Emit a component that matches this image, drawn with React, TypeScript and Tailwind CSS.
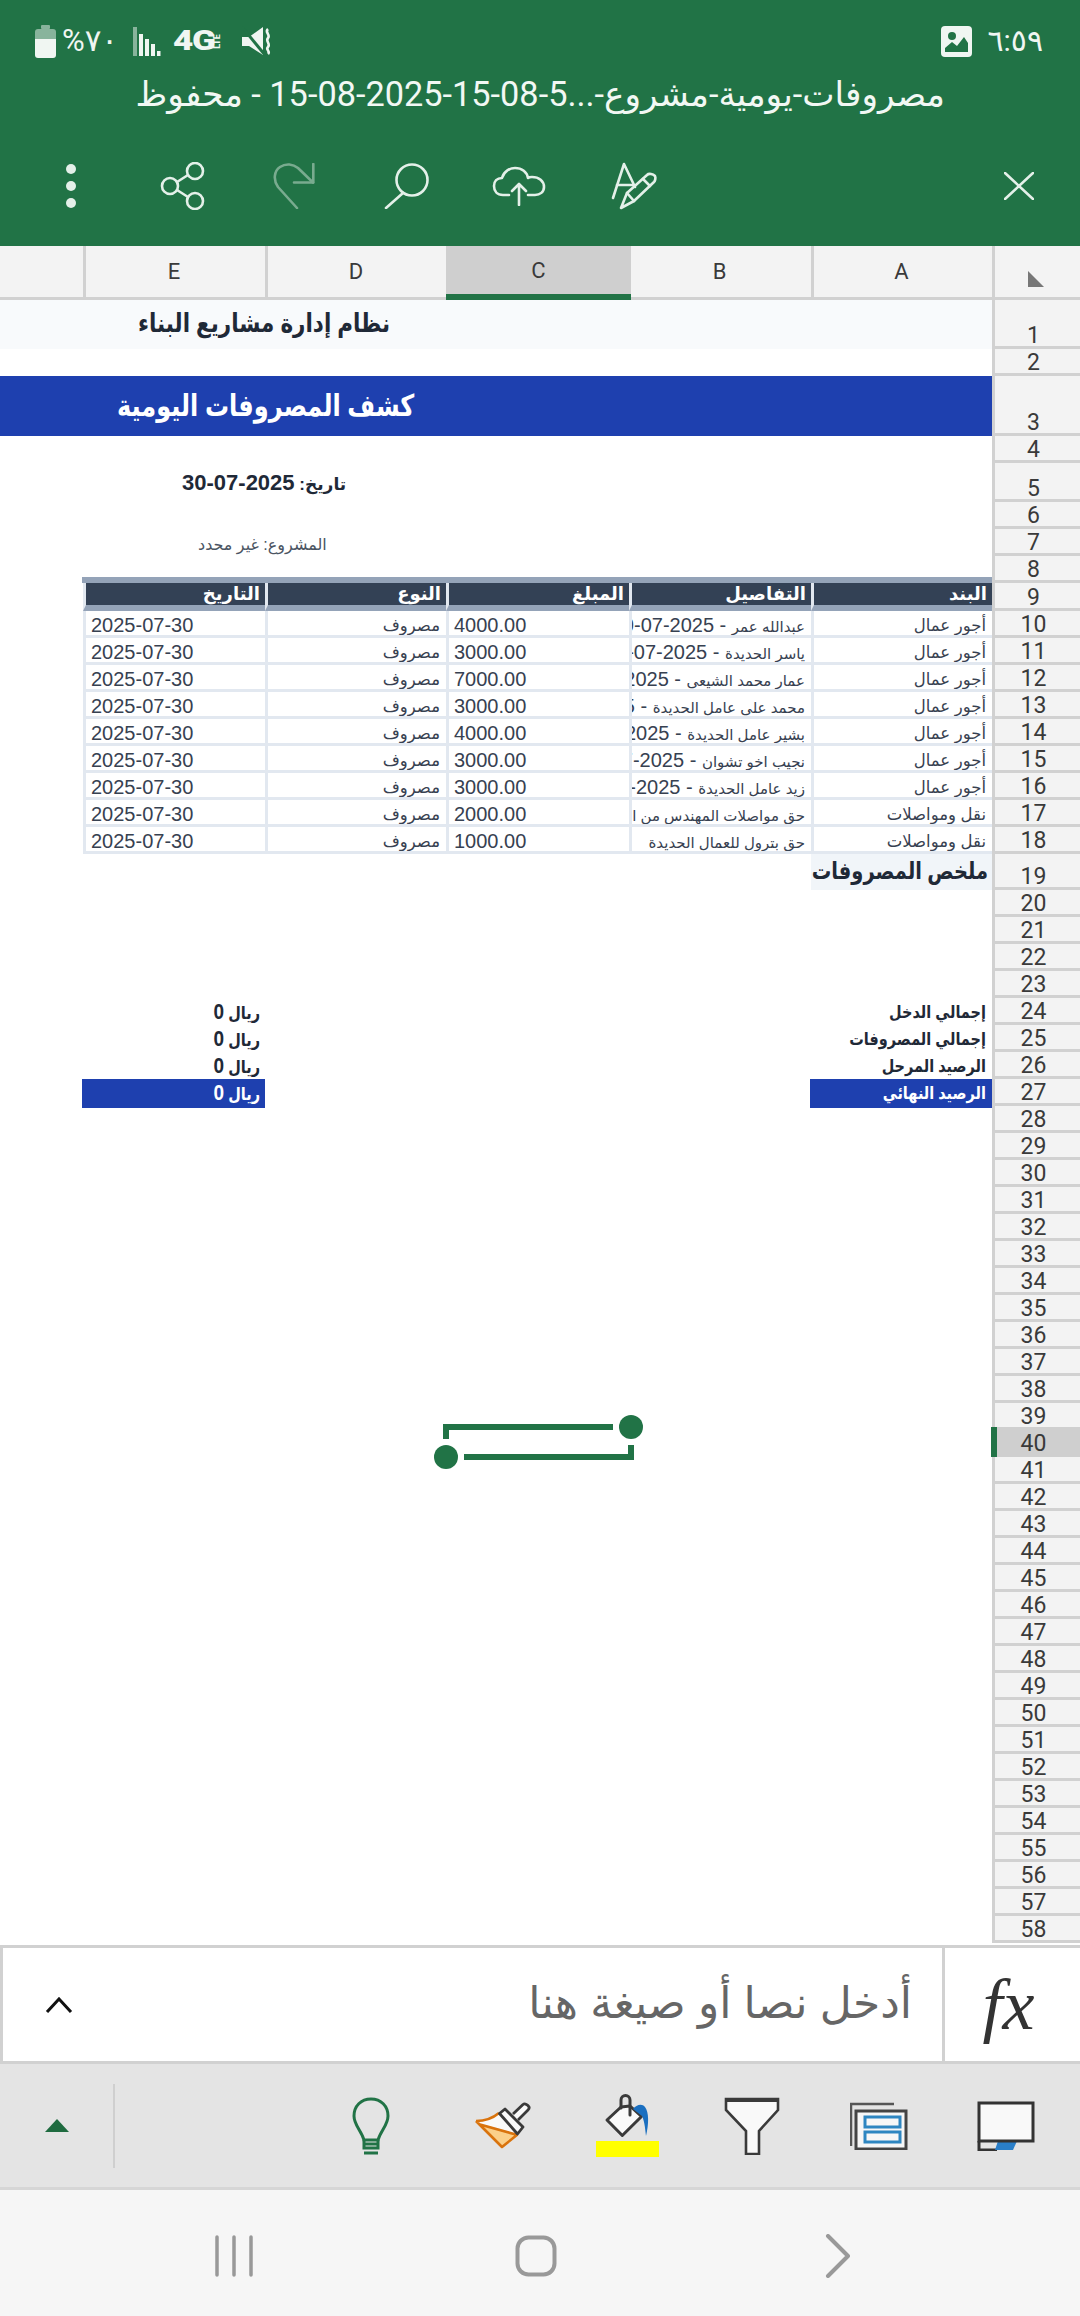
const font = "font-['Liberation_Sans','DejaVu_Sans',sans-serif]";

const rows = [
  { item: "أجور عمال", name: "عبدالله عمر", date: " - 2025-07-30", amount: "4000.00" },
  { item: "أجور عمال", name: "ياسر الحديدة", date: " - 2025-07-30", amount: "3000.00" },
  { item: "أجور عمال", name: "عمار محمد الشيعي", date: " - 2025-07-30", amount: "7000.00" },
  { item: "أجور عمال", name: "محمد على عامل الحديدة", date: " - 2025-07-30", amount: "3000.00" },
  { item: "أجور عمال", name: "بشير عامل الحديدة", date: " - 2025-07-30", amount: "4000.00" },
  { item: "أجور عمال", name: "نجيب اخو تشوان", date: " - 2025-07-30", amount: "3000.00" },
  { item: "أجور عمال", name: "زيد عامل الحديدة", date: " - 2025-07-30", amount: "3000.00" },
  { item: "نقل ومواصلات", name: "حق مواصلات المهندس من الموقع", date: "", amount: "2000.00" },
  { item: "نقل ومواصلات", name: "حق بترول للعمال الحديدة", date: "", amount: "1000.00" },
];

const summary = [
  { n: 24, label: "إجمالي الدخل" },
  { n: 25, label: "إجمالي المصروفات" },
  { n: 26, label: "الرصيد المرحل" },
];

const grid = "grid grid-cols-[83px_182px_181px_183px_182px_181px] w-[992px]";

function RowHead({ n }: { n: number }) {
  return (
    <div className="relative w-[88px] shrink-0 bg-[#f3f3f3] border-l-[3px] border-b-[3px] border-[#d1d1d1] flex items-end justify-center pr-[8px] font-['Roboto',sans-serif] text-[23px] leading-[21px] text-[#3a3a3a]">
      {n === 40 && (
        <div className="absolute left-[-4px] right-0 top-[-3px] bottom-[-3px] bg-[#cfcfcf] border-l-[6px] border-[#217346]" />
      )}
      <span className="relative">{n}</span>
    </div>
  );
}

function Row({ n, h = "h-[27px]", children }: { n: number; h?: string; children?: React.ReactNode }) {
  return (
    <div className={`flex ${h}`}>
      <div className="w-[992px] shrink-0 min-w-0">{children}</div>
      <RowHead n={n} />
    </div>
  );
}

function TableCell({ children, num, ltr }: { children: React.ReactNode; num?: boolean; ltr?: boolean }) {
  return (
    <div
      dir={ltr ? "ltr" : "rtl"}
      className={`h-full overflow-hidden whitespace-nowrap bg-white border-l-[3px] border-b-[3px] border-[#e2e8f0] text-[#374151] leading-[28px] ${
        num ? "text-[20px] pl-[5px]" : "text-[16.5px] pr-[6px]"
      }`}
    >
      {children}
    </div>
  );
}

function HeadCell({ children }: { children: React.ReactNode }) {
  return (
    <div dir="rtl" className="h-full border-l-[3px] border-[#e2e8f0] bg-[#334155] pr-[5px] text-white font-bold text-[18px] leading-[22px] border-b-[6px] border-b-[#94a3b8] overflow-hidden whitespace-nowrap">
      {children}
    </div>
  );
}

function TopIcons() {
  const s = { fill: "none", stroke: "#e4f0e9", strokeWidth: 2.6, strokeLinecap: "round" as const, strokeLinejoin: "round" as const };
  return (
    <div className="flex items-center h-[86px] pl-[15px]">
      <div className="w-[112px] flex justify-center">
        <svg width="14" height="46" viewBox="0 0 14 46">
          <circle cx="7" cy="6" r="5" fill="#e4f0e9" />
          <circle cx="7" cy="23" r="5" fill="#e4f0e9" />
          <circle cx="7" cy="40" r="5" fill="#e4f0e9" />
        </svg>
      </div>
      <div className="w-[112px] flex justify-center">
        <svg width="46" height="48" viewBox="0 0 46 48" {...s}>
          <circle cx="35" cy="9" r="8" />
          <circle cx="10" cy="24" r="8" />
          <circle cx="35" cy="39" r="8" />
          <path d="M17 20 28 13M17 28 28 35" />
        </svg>
      </div>
      <div className="w-[112px] flex justify-center">
        <svg width="44" height="46" viewBox="0 0 44 46" {...s} opacity="0.45">
          <path d="M24 45 5 24C0 17 1 8 7 4 13 0 20 1 25 5L40 19.5" />
          <path d="M40.3 1V19.5H21" />
        </svg>
      </div>
      <div className="w-[112px] flex justify-center">
        <svg width="46" height="46" viewBox="0 0 46 46" {...s}>
          <circle cx="28" cy="17" r="15.5" />
          <path d="M19 30 2 45" />
        </svg>
      </div>
      <div className="w-[112px] flex justify-center">
        <svg width="54" height="40" viewBox="0 0 54 40" {...s}>
          <path d="M17 29H11C5 29 2 25 2 20 C2 15 5 12 10 12 C12 5 18 2 23 2 C30 2 35 6 36 12 C37 11 38 11 40 11 C47 11 52 15 52 21 C52 26 48 29 43 29H36" />
          <path d="M27 39V18M20 25 27 18 34 25" />
        </svg>
      </div>
      <div className="w-[112px] flex justify-center pl-[8px]">
        <svg width="48" height="48" viewBox="0 0 48 48" {...s}>
          <path d="M2 36 13 2 24 25" />
          <path d="M6 23H22" />
          <path d="M10 46 16 31 36 13C38 11 42 12 44 14 45 16 44 19 43 20L23 39Z" />
          <path d="M32 17 39 24M16 31 23 39" />
        </svg>
      </div>
      <div className="ml-auto pr-[46px]">
        <svg width="30" height="28" viewBox="0 0 30 28" {...s}>
          <path d="M1 1 29 27M29 1 1 27" />
        </svg>
      </div>
    </div>
  );
}

function StatusBar() {
  return (
    <div className="flex items-center justify-between h-[60px] pt-[22px] pl-[35px] pr-[37px] text-[#f0f6f2]">
      <div className="flex items-center">
        <svg width="21" height="33" viewBox="0 0 21 33">
          <rect x="6" y="0" width="9" height="4" rx="1" fill="#f0f6f2" opacity="0.5" />
          <path d="M0 7a3 3 0 0 1 3-3H18a3 3 0 0 1 3 3V14H0Z" fill="#f0f6f2" opacity="0.5" />
          <path d="M0 14H21V30a3 3 0 0 1-3 3H3a3 3 0 0 1-3-3Z" fill="#f0f6f2" />
        </svg>
        <span className="ml-[6px] w-[57px] font-['Roboto','DejaVu_Sans',sans-serif] text-[31px] leading-[30px] whitespace-nowrap">%٧٠</span>
        <svg className="ml-[14px]" width="28" height="29" viewBox="0 0 28 29" fill="#f0f6f2">
          <rect x="0" y="0" width="4" height="29" opacity="0.5" />
          <rect x="6" y="7" width="4" height="22" />
          <rect x="12" y="12" width="4" height="17" />
          <rect x="18" y="17" width="4" height="12" />
          <rect x="24" y="24" width="3.5" height="5" />
        </svg>
        <span className="ml-[12px] w-[39px] origin-left scale-x-[1.3] font-['Roboto',sans-serif] font-black text-[27px] leading-[24px] tracking-[-1px]">4G</span>
        <span className="w-[11px] h-[20px] flex items-center justify-center">
          <span className="block -rotate-90 text-[9px] leading-[9px] font-['Roboto',sans-serif] font-bold">LTE</span>
        </span>
        <svg className="ml-[19px]" width="31" height="30" viewBox="0 0 31 30" fill="#f0f6f2">
          <path d="M0 11H7L21 1V29L7 20H0Z" />
          <path d="M0 1 23 29" stroke="#217346" strokeWidth="3" />
          <path d="M26 3C22 6 29 9 26 12 23 15 29 18 26 21 23 24 29 25 26 28" fill="none" stroke="#f0f6f2" strokeWidth="2.6" />
        </svg>
      </div>
      <div className="flex items-center">
        <svg width="31" height="31" viewBox="0 0 31 31">
          <rect width="31" height="31" rx="4" fill="#f0f6f2" />
          <circle cx="11" cy="10" r="4" fill="#217346" />
          <path d="M4 26V22L11 16 16 20 23 11 27 17V26Z" fill="#217346" />
        </svg>
        <span className="ml-[15px] font-['Roboto','DejaVu_Sans',sans-serif] text-[30px] leading-[30px]">٦:٥٩</span>
      </div>
    </div>
  );
}

function Bulb() {
  return (
    <svg width="38" height="58" viewBox="0 0 38 58" fill="none" stroke="#217346" strokeWidth="3">
      <path d="M19 2C9 2 2 9 2 19 2 28 9 33 12 43H26C29 33 36 28 36 19 36 9 29 2 19 2Z" />
      <path d="M12 43V51H26V43M13 47H25" />
      <path d="M12 56H26" strokeWidth="3" />
    </svg>
  );
}

function Brush() {
  return (
    <svg width="56" height="48" viewBox="0 0 56 48">
      <path d="M1 19 27 45 42.5 32.5 6 22Z" fill="#fbd08a" />
      <path d="M1 19C10 19 18 16 24 11L43 32 6 22Z" fill="#fafafa" />
      <path d="M1 19C10 19 18 16 24 11M1 19 27 45 42.5 32.5M5 22.5 42.5 33" fill="none" stroke="#d9730d" strokeWidth="2.6" strokeLinejoin="round" />
      <path d="M24.5 11.5 30 7 48 25 42.5 32Z" fill="#fafafa" stroke="#3a3a3a" strokeWidth="2.8" strokeLinejoin="round" />
      <path d="M38 12 48 2.5C50 1 53 3 54 5 54.5 6 54 7 53 8L43 18" fill="#fafafa" stroke="#3a3a3a" strokeWidth="2.8" strokeLinejoin="round" />
    </svg>
  );
}

function Fill() {
  return (
    <svg width="64" height="64" viewBox="0 0 64 64">
      <path d="M25 13 11 26 26.3 41.5 45.5 22.5 34 12Z" fill="#fafafa" stroke="#3a3a3a" strokeWidth="3" strokeLinejoin="round" />
      <path d="M25 14V6a4.5 4.5 0 0 1 9 0V21" fill="none" stroke="#3a3a3a" strokeWidth="3" strokeLinecap="round" />
      <path d="M37 15C40 11 46 9 49 13 53 18 53 30 50 42 49 32 48 26 46 22Z" fill="#1a6fc0" />
      <rect x="0" y="47" width="63" height="16" fill="#ffff00" />
    </svg>
  );
}

function Filter() {
  return (
    <svg width="56" height="58" viewBox="0 0 56 58">
      <path d="M2 2H54V13L35 34V57H22V34L2 13Z" fill="#f9f9f9" stroke="#3a3a3a" strokeWidth="2.6" strokeLinejoin="miter" />
      <path d="M2 3H54" stroke="#3a3a3a" strokeWidth="4" />
    </svg>
  );
}

function Cards() {
  return (
    <svg width="58" height="48" viewBox="0 0 58 48">
      <path d="M44 2H1V44" fill="none" stroke="#555" strokeWidth="2.5" />
      <rect x="6" y="9" width="50" height="38" fill="#f7f7f7" stroke="#444" strokeWidth="3" />
      <rect x="15" y="15" width="35" height="10" fill="#f7f7f7" stroke="#2e86c1" strokeWidth="3" />
      <rect x="15" y="30" width="35" height="10" fill="#f7f7f7" stroke="#2e86c1" strokeWidth="3" />
    </svg>
  );
}

function Freeze() {
  return (
    <svg width="58" height="50" viewBox="0 0 58 50">
      <path d="M2 40V49H20M2 40" fill="none" stroke="#333" strokeWidth="3" />
      <path d="M21 40H40L36 49H18Z" fill="#2a7fc9" />
      <rect x="2" y="2" width="54" height="38" fill="#f9f9f9" stroke="#333" strokeWidth="3" />
    </svg>
  );
}

export default function App() {
  const nums: number[] = [];
  for (let i = 28; i <= 58; i++) nums.push(i);

  return (
    <div className={`w-[1080px] h-[2316px] overflow-hidden bg-white flex flex-col ${font}`}>
      <div className="h-[246px] bg-[#217346] shrink-0">
        <StatusBar />
        <div dir="rtl" className="h-[83px] pt-[12px] pr-[135px] font-['Roboto','DejaVu_Sans',sans-serif] text-[34.3px] leading-[44px] text-[#f2f8f4] whitespace-nowrap">
          مصروفات-يومية-مشروع-...5-08-15-2025-08-15 - محفوظ
        </div>
        <TopIcons />
      </div>

      <div className="flex h-[54px] bg-[#f3f3f3] border-b-[3px] border-[#d1d1d1] font-['Roboto',sans-serif] text-[22px] text-[#3a3a3a] shrink-0">
        <div className="w-[86px] border-r-[3px] border-[#d1d1d1]" />
        <div className="w-[182px] border-r-[3px] border-[#d1d1d1] flex items-center justify-center pr-[3px]">E</div>
        <div className="w-[178px] flex items-center justify-center pr-[2px]">D</div>
        <div className="w-[185px] bg-[#cfcfcf] border-b-[6px] mb-[-3px] border-[#217346] flex items-center justify-center">C</div>
        <div className="w-[183px] border-r-[3px] border-[#d1d1d1] flex items-center justify-center pr-[3px]">B</div>
        <div className="w-[181px] border-r-[3px] border-[#d1d1d1] flex items-center justify-center pr-[3px]">A</div>
        <div className="w-[85px] flex items-center justify-center pt-[14px] pr-[4px]">
          <svg width="16" height="16" viewBox="0 0 16 16"><path d="M0 0V16H16Z" fill="#777" /></svg>
        </div>
      </div>

      <div className="relative h-[1645px] overflow-hidden shrink-0">
        <Row n={1} h="h-[49px]">
          <div dir="rtl" className="h-full bg-[#f8fafc] flex items-center justify-end pl-[138px] text-[21.5px] font-bold text-[#1f2937]">
            <span className="scale-y-[1.2]">نظام إدارة مشاريع البناء</span>
          </div>
        </Row>
        <Row n={2} />
        <Row n={3} h="h-[60px]">
          <div dir="rtl" className="h-full bg-[#1e40af] flex items-center justify-end pl-[117px] text-[24px] font-bold text-white">
            <span className="scale-y-[1.25]">كشف المصروفات اليومية</span>
          </div>
        </Row>
        <Row n={4} />
        <Row n={5} h="h-[39px]">
          <div dir="rtl" className="h-full flex items-center justify-end pl-[182px] text-[17px] font-bold text-[#1f2937]">
            <span>تاريخ: <span className="text-[22px]">2025-07-30</span></span>
          </div>
        </Row>
        <Row n={6} />
        <Row n={7}>
          <div dir="rtl" className="h-full flex items-start justify-end pl-[198px] pt-[4px] text-[16px] text-[#4b5563]">المشروع: غير محدد</div>
        </Row>
        <Row n={8}>
          <div className="h-full flex flex-col justify-end pl-[82px]">
            <div className="h-[6px] bg-[#94a3b8]" />
          </div>
        </Row>
        <Row n={9} h="h-[28px]">
          <div className={`${grid} h-full`}>
            <div />
            <HeadCell>التاريخ</HeadCell>
            <HeadCell>النوع</HeadCell>
            <HeadCell>المبلغ</HeadCell>
            <HeadCell>التفاصيل</HeadCell>
            <HeadCell>البند</HeadCell>
          </div>
        </Row>
        {rows.map((r, i) => (
          <Row key={i} n={i + 10}>
            <div className={`${grid} h-full`}>
              <div />
              <TableCell num ltr>2025-07-30</TableCell>
              <TableCell>مصروف</TableCell>
              <TableCell num ltr>{r.amount}</TableCell>
              <TableCell>
                <span className="text-[15px]">{r.name}</span>
                <span className="text-[20px]">{r.date}</span>
              </TableCell>
              <TableCell>{r.item}</TableCell>
            </div>
          </Row>
        ))}
        <Row n={19} h="h-[36px]">
          <div className={`${grid} h-full`}>
            <div className="col-span-5" />
            <div dir="rtl" className="bg-[#f1f5f9] pr-[4px] flex items-center text-[19.5px] font-bold text-[#1f2937] whitespace-nowrap">
              <span className="scale-y-[1.2]">ملخص المصروفات</span>
            </div>
          </div>
        </Row>
        <Row n={20} />
        <Row n={21} />
        <Row n={22} />
        <Row n={23} />
        {summary.map((s) => (
          <Row key={s.n} n={s.n}>
            <div className={`${grid} h-full text-[14.5px] font-bold text-[#1f2937] leading-[28px]`}>
              <div />
              <div dir="rtl" className="pr-[5px] whitespace-nowrap">
                <span className="inline-block scale-y-[1.2]">ريال <span className="text-[19px]">0</span></span>
              </div>
              <div className="col-span-3" />
              <div dir="rtl" className="pr-[6px] whitespace-nowrap">
                <span className="inline-block scale-y-[1.2]">{s.label}</span>
              </div>
            </div>
          </Row>
        ))}
        <Row n={27}>
          <div className={`${grid} h-full text-[14.5px] font-bold text-white leading-[28px]`}>
            <div />
            <div dir="rtl" className="bg-[#1e40af] pr-[5px] ml-[-1px] whitespace-nowrap">
              <span className="inline-block scale-y-[1.2]">ريال <span className="text-[19px]">0</span></span>
            </div>
            <div className="col-span-3" />
            <div dir="rtl" className="bg-[#1e40af] pr-[6px] ml-[-1px] whitespace-nowrap">
              <span className="inline-block scale-y-[1.2]">الرصيد النهائي</span>
            </div>
          </div>
        </Row>
        {nums.map((n) => (
          <Row key={n} n={n} />
        ))}

        {/* selection handles over cell C40 */}
        <div className="absolute left-[443px] top-[1124px] w-[170px] h-[15px] border-l-[6px] border-t-[6px] border-[#217346]" />
        <div className="absolute left-[464px] top-[1145px] w-[170px] h-[15px] border-r-[6px] border-b-[6px] border-[#217346]" />
        <div className="absolute left-[619px] top-[1115px] w-[24px] h-[24px] rounded-full bg-[#217346]" />
        <div className="absolute left-[434px] top-[1145px] w-[24px] h-[24px] rounded-full bg-[#217346]" />
      </div>

      <div className="flex h-[119px] bg-white border-y-[3px] border-l-[3px] border-[#d1d1d1] shrink-0">
        <div className="w-[939px] flex items-center">
          <svg className="ml-[42px]" width="28" height="16" viewBox="0 0 28 16" fill="none" stroke="#111" strokeWidth="3">
            <path d="M2 15 14 2 26 15" />
          </svg>
          <div dir="rtl" className="ml-auto pr-[30px] mb-[4px] text-[44px] leading-[60px] text-[#666] whitespace-nowrap">أدخل نصا أو صيغة هنا</div>
        </div>
        <div className="flex-1 border-l-[3px] border-[#d1d1d1] flex items-center justify-center pr-[8px] font-['Liberation_Serif',serif] italic text-[72px] text-[#333]">fx</div>
      </div>

      <div className="flex h-[123px] bg-[#e4e4e4] shrink-0 items-center">
        <div className="w-[115px] h-[84px] border-r-[2px] border-[#cfcfcf] flex items-center justify-center">
          <svg width="24" height="13" viewBox="0 0 24 13"><path d="M12 0 24 13H0Z" fill="#1f6b40" /></svg>
        </div>
        <div className="flex-1 flex justify-end pr-[11px] items-center">
          <div className="w-[127px] flex justify-center"><Bulb /></div>
          <div className="w-[127px] flex justify-center pl-[10px]"><Brush /></div>
          <div className="w-[127px] flex justify-center pl-[7px]"><Fill /></div>
          <div className="w-[127px] flex justify-center"><Filter /></div>
          <div className="w-[127px] flex justify-center"><Cards /></div>
          <div className="w-[127px] flex justify-center"><Freeze /></div>
        </div>
      </div>

      <div className="flex-1 bg-[#f6f6f6] border-t-[3px] border-[#d6d6d6] flex items-center pl-[83px] pt-[6px]">
        <div className="w-[302px] flex justify-center">
          <svg width="40" height="42" viewBox="0 0 40 42" stroke="#999" strokeWidth="3.5" strokeLinecap="round">
            <path d="M3 2V40M20 2V40M37 2V40" />
          </svg>
        </div>
        <div className="w-[302px] flex justify-center">
          <svg width="42" height="42" viewBox="0 0 42 42" fill="none" stroke="#999" strokeWidth="4">
            <rect x="2.5" y="2.5" width="37" height="37" rx="11" />
          </svg>
        </div>
        <div className="w-[302px] flex justify-center">
          <svg width="26" height="44" viewBox="0 0 26 44" fill="none" stroke="#999" strokeWidth="4" strokeLinecap="round" strokeLinejoin="round">
            <path d="M3 2 23 22 3 42" />
          </svg>
        </div>
      </div>
    </div>
  );
}
